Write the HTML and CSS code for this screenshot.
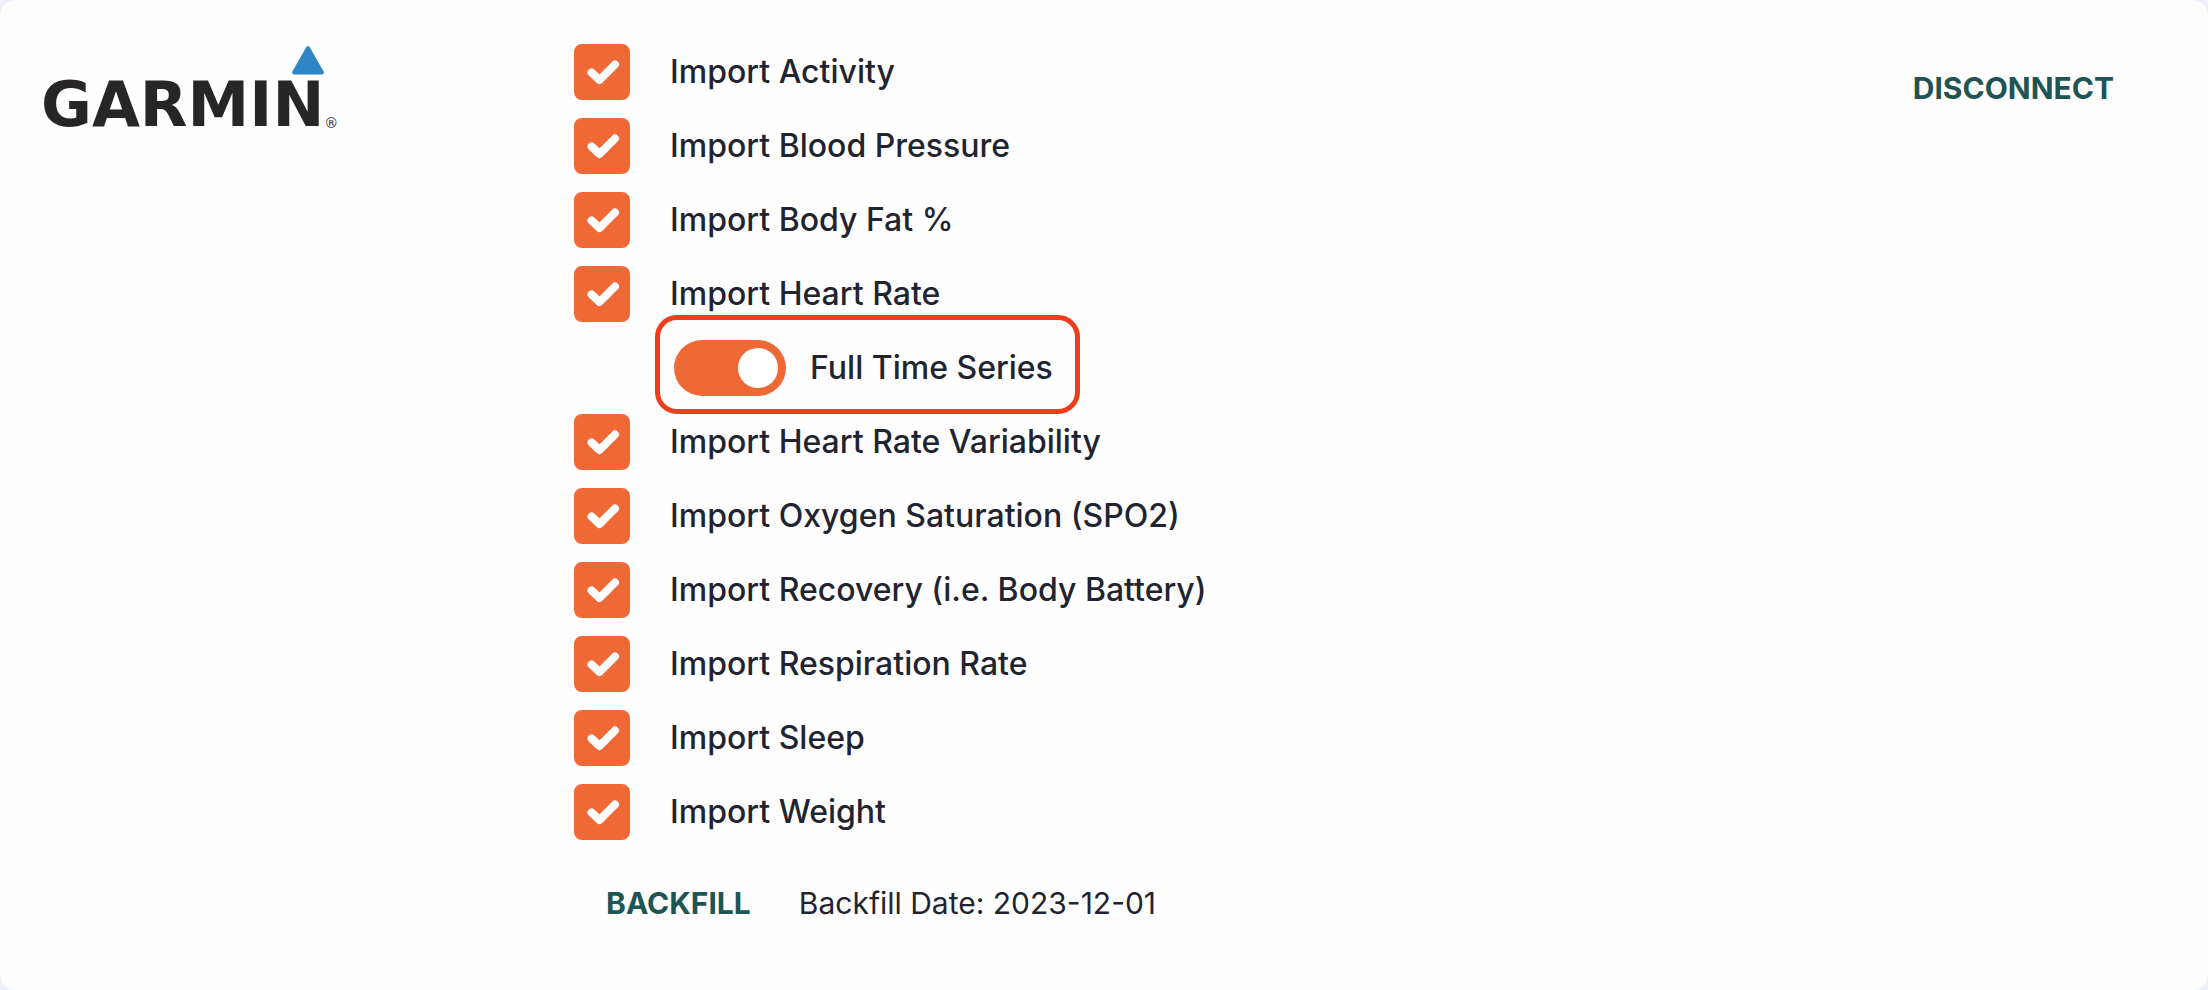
FILE: index.html
```html
<!DOCTYPE html>
<html lang="en">
<head>
    <meta charset="UTF-8">
    <title>Garmin Integration</title>
    <link rel="stylesheet" href="styles.css">
</head>
<body>

<div class="card">
    <div class="brand">
        <div class="logo">
            <svg class="logo-mark" viewBox="0 0 34 30" aria-hidden="true">
                <path d="M15 1.5Q17-1.5 19 1.5L33 26Q34.500 29.500 31 29.500H3Q-.5 29.500 1 26Z" fill="#2f86c7"/>
            </svg>
            <span class="logo-name">GARMIN</span><span class="logo-reg">®</span>
        </div>
    </div>

    <form class="settings">
        <label class="option"><input type="checkbox" class="check" checked> Import Activity</label>
        <label class="option"><input type="checkbox" class="check" checked> Import Blood Pressure</label>
        <label class="option"><input type="checkbox" class="check" checked> Import Body Fat %</label>
        <label class="option"><input type="checkbox" class="check" checked> Import Heart Rate</label>
        <label class="sub-option"><input type="checkbox" class="toggle" role="switch" checked> Full Time Series</label>
        <label class="option"><input type="checkbox" class="check" checked> Import Heart Rate Variability</label>
        <label class="option"><input type="checkbox" class="check" checked> Import Oxygen Saturation (SPO2)</label>
        <label class="option"><input type="checkbox" class="check" checked> Import Recovery (i.e. Body Battery)</label>
        <label class="option"><input type="checkbox" class="check" checked> Import Respiration Rate</label>
        <label class="option"><input type="checkbox" class="check" checked> Import Sleep</label>
        <label class="option"><input type="checkbox" class="check" checked> Import Weight</label>
        <div class="backfill">
            <button type="button" class="text-button">BACKFILL</button>
            <span>Backfill Date: 2023-12-01</span>
        </div>
    </form>

    <div class="actions">
        <button type="button" class="text-button">DISCONNECT</button>
    </div>
</div>

</body>
</html>
```
FILE: styles.css
```css
* {
    box-sizing: border-box;
}
body {
    margin: 0;
    background: #eff1fa;
    color: #1f2430;
    font-family: Inter, "Liberation Sans", sans-serif;
    font-size: 32px;
    line-height: 40px;
}
.card {
    display: grid;
    grid-template-columns: 26% 1fr auto;
    min-height: 100vh;
    background: #fefefe;
    border-radius: 16px;
}
.brand {
    padding: 46px 0 0 41px;
}
.logo {
    display: grid;
    grid-template-columns: auto 1fr;
    color: #272526;
    font-family: "DejaVu Sans", sans-serif;
}
.logo-mark {
    grid-column: 1 / -1;
    width: 34px;
    height: 29px;
    margin-left: 250px;
}
.logo-name {
    font-size: 62px;
    font-weight: bold;
    line-height: 60px;
}
.logo-reg {
    align-self: end;
    font-size: 14px;
    line-height: 24px;
}
.settings {
    display: flex;
    flex-direction: column;
    align-items: flex-start;
    padding: 35px 0;
}
.option {
    display: flex;
    align-items: center;
    gap: 40px;
    height: 74px;
    font-weight: 500;
}
.check {
    appearance: none;
    width: 56px;
    height: 56px;
    margin: 0;
    border: 3px solid #ef6937;
    border-radius: 8px;
}
.check:checked {
    background: #ef6937 url("data:image/svg+xml,%3Csvg xmlns='http://www.w3.org/2000/svg' viewBox='0 0 56 56'%3E%3Cpath d='M17.500 28.500L25.500 36L41 20.500' fill='none' stroke='white' stroke-width='8' stroke-linecap='round' stroke-linejoin='round'/%3E%3C/svg%3E") center / 56px 56px no-repeat;
}
/* taller than a normal row, the margins keep the list pitch */
.sub-option {
    display: flex;
    align-items: center;
    gap: 24px;
    height: 99px;
    margin: -16px 0 -9px 81px;
    padding: 6px 22px 0 14px;
    border: 5px solid #ee3c1c;
    border-radius: 22px;
    font-weight: 500;
}
.toggle {
    appearance: none;
    width: 112px;
    height: 56px;
    margin: 0;
    padding: 8px;
    border-radius: 28px;
    background: #b9bdc7;
}
.toggle::before {
    content: "";
    display: block;
    width: 40px;
    height: 40px;
    border-radius: 50%;
    background: #fff;
}
.toggle:checked {
    background: #ef6937;
}
.toggle:checked::before {
    margin-left: auto;
}
.backfill {
    display: flex;
    align-items: center;
    gap: 48px;
    padding: 34px 0 0 32px;
    font-size: 30px;
}
.text-button {
    padding: 0;
    border: none;
    background: none;
    color: #1f5454;
    font: inherit;
    font-size: 30px;
    font-weight: 700;
    cursor: pointer;
}
.actions {
    padding: 68px 94px 0 0;
}
```
